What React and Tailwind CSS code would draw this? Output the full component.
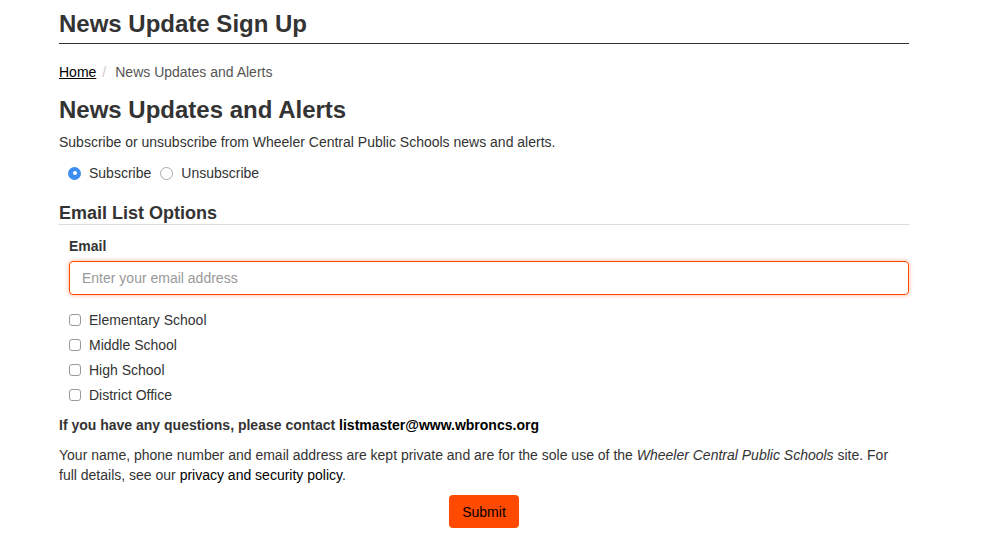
export default function App() {
  const lists = ["Elementary School", "Middle School", "High School", "District Office"];

  return (
    <div className="min-h-screen bg-white text-[#333] font-['Liberation_Sans',Arial,sans-serif] text-[14px] leading-[20px]">
      <div className="w-[850px] ml-[59px]">
        <h1 className="pt-[9px] pb-[5px] border-b border-[#333] text-[24px] font-bold leading-[29px]">
          News Update Sign Up
        </h1>

        <nav className="mt-[18px] flex items-center gap-[6px]">
          <a href="#" className="text-black underline">Home</a>
          <span className="text-[#ccc]">/</span>
          <span className="text-[#555] ml-[3px]">News Updates and Alerts</span>
        </nav>

        <h2 className="mt-[13px] text-[24px] font-semibold leading-[29px]">News Updates and Alerts</h2>
        <p className="mt-[8px]">Subscribe or unsubscribe from Wheeler Central Public Schools news and alerts.</p>

        <div className="mt-[11px] pl-[9px] flex items-center">
          <label className="flex items-center">
            <span className="w-[13px] h-[13px] rounded-full bg-[#3b8ef0] flex items-center justify-center">
              <span className="w-[4px] h-[4px] rounded-full bg-white" />
            </span>
            <span className="ml-[8px]">Subscribe</span>
          </label>
          <label className="flex items-center ml-[9px]">
            <span className="w-[13px] h-[13px] rounded-full border border-[#aaa] bg-white" />
            <span className="ml-[8px]">Unsubscribe</span>
          </label>
        </div>

        <h3 className="mt-[19px] border-b border-[#ddd] text-[18px] font-semibold leading-[22px]">
          Email List Options
        </h3>

        <div className="pl-[10px]">
          <label className="block mt-[11px] font-bold">Email</label>
          <input
            type="text"
            placeholder="Enter your email address"
            className="mt-[5px] block w-full h-[34px] px-[12px] rounded-[4px] border border-[#ff4a00] shadow-[0_0_4px_rgba(255,74,0,0.45)] outline-none placeholder:text-[#999] text-[14px]"
          />

          <div className="mt-[15px] flex flex-col gap-[5px]">
            {lists.map((l) => (
              <label key={l} className="flex items-center">
                <span className="w-[12px] h-[12px] rounded-[3px] border border-[#999] bg-white" />
                <span className="ml-[8px]">{l}</span>
              </label>
            ))}
          </div>
        </div>

        <p className="mt-[10px] font-bold">
          If you have any questions, please contact <span className="text-black">listmaster@www.wbroncs.org</span>
        </p>

        <p className="mt-[10px]">
          Your name, phone number and email address are kept private and are for the sole use of the{" "}
          <em>Wheeler Central Public Schools</em> site. For full details, see our{" "}
          <a href="#" className="text-black">privacy and security policy</a>.
        </p>

        <div className="mt-[10px] flex justify-center">
          <button className="h-[33px] px-[13px] rounded-[4px] bg-[#ff4a00] text-black text-[14px]">Submit</button>
        </div>
      </div>
    </div>
  );
}
